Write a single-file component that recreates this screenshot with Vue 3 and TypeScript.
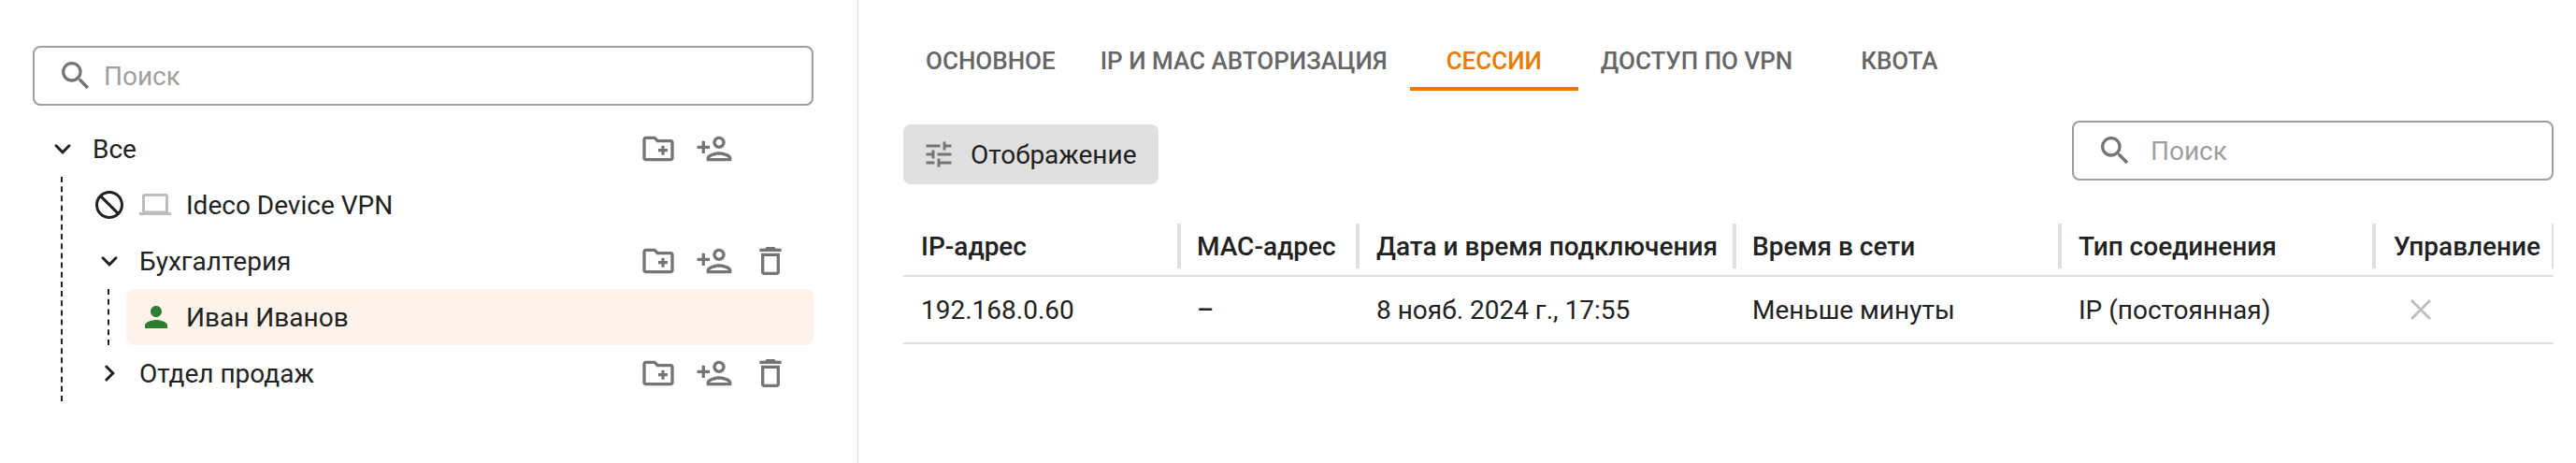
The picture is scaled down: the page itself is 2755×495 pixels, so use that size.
<script setup lang="ts">
interface Column {
  title: string
  value: string
}

const tabs: string[] = ['ОСНОВНОЕ', 'IP И MAC АВТОРИЗАЦИЯ', 'СЕССИИ', 'ДОСТУП ПО VPN', 'КВОТА']
const activeTab = 'СЕССИИ'

const columns: Column[] = [
  { title: 'IP-адрес', value: '192.168.0.60' },
  { title: 'MAC-адрес', value: '–' },
  { title: 'Дата и время подключения', value: '8 нояб. 2024 г., 17:55' },
  { title: 'Время в сети', value: 'Меньше минуты' },
  { title: 'Тип соединения', value: 'IP (постоянная)' },
  { title: 'Управление', value: '' },
]

const icons = {
  search:
    'M15.5 14h-.79l-.28-.27A6.471 6.471 0 0 0 16 9.5 6.5 6.5 0 1 0 9.5 16c1.61 0 3.09-.59 4.23-1.57l.27.28v.79l5 4.99L20.49 19l-4.99-5zm-6 0C7.01 14 5 11.99 5 9.5S7.01 5 9.5 5 14 7.01 14 9.5 11.99 14 9.5 14z',
  addFolder:
    'M20 6h-8l-2-2H4c-1.11 0-1.99.89-1.99 2L2 18c0 1.11.89 2 2 2h16c1.11 0 2-.89 2-2V8c0-1.11-.89-2-2-2zm0 12H4V6h5.17l2 2H20v10zm-8-4h2v2h2v-2h2v-2h-2v-2h-2v2h-2v2z',
  addUser:
    'M15 12c2.21 0 4-1.79 4-4s-1.79-4-4-4-4 1.79-4 4 1.79 4 4 4zm0-6c1.1 0 2 .9 2 2s-.9 2-2 2-2-.9-2-2 .9-2 2-2zm0 8c-2.67 0-8 1.34-8 4v2h16v-2c0-2.66-5.33-4-8-4zm-6 4c.22-.72 3.31-2 6-2 2.7 0 5.8 1.29 6 2H9zm-3-3v-3h3v-2H6V7H4v3H1v2h3v3z',
  trash:
    'M6 19c0 1.1.9 2 2 2h8c1.1 0 2-.9 2-2V7H6v12zM8 9h8v10H8V9zm7.5-5l-1-1h-5l-1 1H5v2h14V4z',
  block:
    'M12 2C6.48 2 2 6.48 2 12s4.48 10 10 10 10-4.48 10-10S17.52 2 12 2zM4 12c0-4.42 3.58-8 8-8 1.85 0 3.55.63 4.9 1.69L5.69 16.9C4.63 15.55 4 13.85 4 12zm8 8c-1.85 0-3.55-.63-4.9-1.69L18.31 7.1C19.37 8.45 20 10.15 20 12c0 4.42-3.58 8-8 8z',
  person:
    'M12 12c2.21 0 4-1.79 4-4s-1.79-4-4-4-4 1.79-4 4 1.79 4 4 4zm0 2c-2.67 0-8 1.34-8 4v2h16v-2c0-2.66-5.33-4-8-4z',
  tune: 'M3 17v2h6v-2H3zM3 5v2h10V5H3zm10 16v-2h8v-2h-8v-2h-2v6h2zM7 9v2H3v2h4v2h2V9H7zm14 4v-2H11v2h10zm-6-4h2V7h4V5h-4V3h-2v6z',
}
</script>

<template>
  <div class="page">
    <aside class="sidebar">
      <label class="search">
        <svg class="icon40" viewBox="0 0 24 24"><path :d="icons.search" /></svg>
        <span class="placeholder">Поиск</span>
      </label>

      <div class="tree">
        <div class="row">
          <svg class="chevron" viewBox="0 0 36 36"><path d="M11 14.8l7 7 7-7" /></svg>
          <span class="label">Все</span>
          <div class="actions">
            <svg class="icon40" viewBox="0 0 24 24"><path :d="icons.addFolder" /></svg>
            <svg class="icon40" viewBox="0 0 24 24"><path :d="icons.addUser" /></svg>
          </div>
        </div>

        <div class="children">
          <div class="row">
            <svg class="icon36 dark flip" viewBox="0 0 24 24"><path :d="icons.block" /></svg>
            <svg class="laptop" viewBox="0 0 36 36">
              <rect x="4.5" y="7.5" width="25" height="18.5" rx="1.5" />
              <path d="M0 26h34v3H0z" />
            </svg>
            <span class="label">Ideco Device VPN</span>
          </div>

          <div class="row">
            <svg class="chevron" viewBox="0 0 36 36"><path d="M11 14.8l7 7 7-7" /></svg>
            <span class="label">Бухгалтерия</span>
            <div class="actions">
              <svg class="icon40" viewBox="0 0 24 24"><path :d="icons.addFolder" /></svg>
              <svg class="icon40" viewBox="0 0 24 24"><path :d="icons.addUser" /></svg>
              <svg class="icon40" viewBox="0 0 24 24"><path :d="icons.trash" /></svg>
            </div>
          </div>

          <div class="children">
            <div class="row selected">
              <svg class="icon36 online" viewBox="0 0 24 24"><path :d="icons.person" /></svg>
              <span class="label">Иван Иванов</span>
            </div>
          </div>

          <div class="row">
            <svg class="chevron" viewBox="0 0 36 36"><path d="M14.8 11l7 7-7 7" /></svg>
            <span class="label">Отдел продаж</span>
            <div class="actions">
              <svg class="icon40" viewBox="0 0 24 24"><path :d="icons.addFolder" /></svg>
              <svg class="icon40" viewBox="0 0 24 24"><path :d="icons.addUser" /></svg>
              <svg class="icon40" viewBox="0 0 24 24"><path :d="icons.trash" /></svg>
            </div>
          </div>
        </div>
      </div>
    </aside>

    <main class="content">
      <nav class="tabs">
        <a v-for="tab in tabs" :key="tab" class="tab" :class="{ active: tab === activeTab }">{{ tab }}</a>
      </nav>

      <div class="toolbar">
        <button class="display" type="button">
          <svg class="icon36 muted" viewBox="0 0 24 24"><path :d="icons.tune" /></svg>
          <span class="label">Отображение</span>
        </button>
        <label class="search compact">
          <svg class="icon40" viewBox="0 0 24 24"><path :d="icons.search" /></svg>
          <span class="placeholder">Поиск</span>
        </label>
      </div>

      <div class="table">
        <div class="line head">
          <div v-for="col in columns" :key="col.title" class="cell">
            <span class="label">{{ col.title }}</span>
          </div>
        </div>
        <div class="line body">
          <div v-for="col in columns" :key="col.title" class="cell">
            <span v-if="col.value" class="label" :class="{ empty: col.value === '–' }">{{ col.value }}</span>
            <svg v-else class="close" viewBox="0 0 24 24"><path d="M2 2l20 20M22 2L2 22" /></svg>
          </div>
        </div>
      </div>
    </main>
  </div>
</template>

<style>
body {
  margin: 0;
  background: #fff;
}
</style>

<style scoped>
.page {
  display: flex;
  height: 495px;
  overflow: hidden;
  background: #fff;
  color: #212121;
  font: 400 28px/33px Roboto, sans-serif;
}
.page * {
  box-sizing: border-box;
}
svg {
  display: block;
  flex: none;
}
.icon40 {
  width: 40px;
  height: 40px;
  fill: #757575;
}
.icon36 {
  width: 36px;
  height: 36px;
}
.dark {
  fill: #212121;
}
.flip {
  transform: scaleX(-1);
}
.online {
  fill: #2e7d32;
}
.muted {
  fill: #757575;
}
.label,
.placeholder {
  padding-top: 1px;
  white-space: nowrap;
}

.sidebar {
  flex: none;
  width: 918px;
  padding: 49px 48px 0 35px;
  box-shadow: inset -1px 0 0 #e0e0e0, inset -2px 0 0 #f5f5f5;
}
.search {
  display: flex;
  align-items: center;
  gap: 10px;
  height: 64px;
  padding: 0 24px;
  border: 2px solid #9e9e9e;
  border-radius: 8px;
}
.placeholder {
  color: #9e9e9e;
}
.tree {
  margin-top: 16px;
}
.row {
  display: flex;
  align-items: center;
  gap: 14px;
  height: 60px;
  padding: 0 26px 0 14px;
}
.children {
  margin-left: 30px;
  padding-left: 18px;
  border-left: 2px dashed #212121;
}
.selected {
  border-radius: 8px;
  background: #fdf3ea;
}
.chevron {
  width: 36px;
  height: 36px;
  fill: none;
  stroke: #212121;
  stroke-width: 3;
  stroke-linecap: round;
}
.laptop {
  width: 36px;
  height: 36px;
  fill: #bdbdbd;
}
.laptop rect {
  fill: none;
  stroke: #bdbdbd;
  stroke-width: 3;
}
.actions {
  display: flex;
  gap: 20px;
  width: 160px;
  margin-left: auto;
}

.content {
  flex: none;
  width: 1765px;
  margin-left: 48px;
}
.tabs {
  display: flex;
  height: 97px;
  padding-top: 33px;
}
.tab {
  min-width: 180px;
  padding: 16px 24px 0;
  border-bottom: 4px solid transparent;
  color: #666;
  font-size: 26px;
  font-weight: 500;
  line-height: 32px;
  text-align: center;
  white-space: nowrap;
}
.tab.active {
  border-color: #e87c00;
  color: #e87c00;
}
.toolbar {
  display: flex;
  align-items: flex-start;
  justify-content: space-between;
  margin-top: 32px;
}
.display {
  display: flex;
  align-items: center;
  gap: 16px;
  width: 273px;
  height: 64px;
  margin: 4px 0 0;
  padding: 0 0 0 20px;
  border: 0;
  border-radius: 8px;
  background: #e0e0e0;
  color: #212121;
  font: inherit;
}
.compact {
  gap: 18px;
  width: 515px;
}
.table {
  margin-top: 42px;
}
.line {
  display: grid;
  grid-template-columns: 297px 191px 403px 348px 336px 190px;
  border-bottom: 2px solid #e0e0e0;
}
.cell {
  display: flex;
  align-items: center;
  padding-left: 17px;
}
.cell:nth-child(odd) {
  padding-left: 18px;
}
.cell:first-child,
.cell:last-child {
  padding-left: 19px;
}
.head {
  height: 57px;
  font-weight: 500;
}
.head .cell {
  height: 48px;
  border-right: 4px solid #e0e0e0;
}
.head .cell:last-child {
  border-right-width: 2px;
}
.body {
  height: 72px;
}
.empty {
  font-weight: 500;
}
.close {
  width: 24px;
  height: 24px;
  margin-left: 17px;
  fill: none;
  stroke: #bdbdbd;
  stroke-width: 2.8;
}
</style>
